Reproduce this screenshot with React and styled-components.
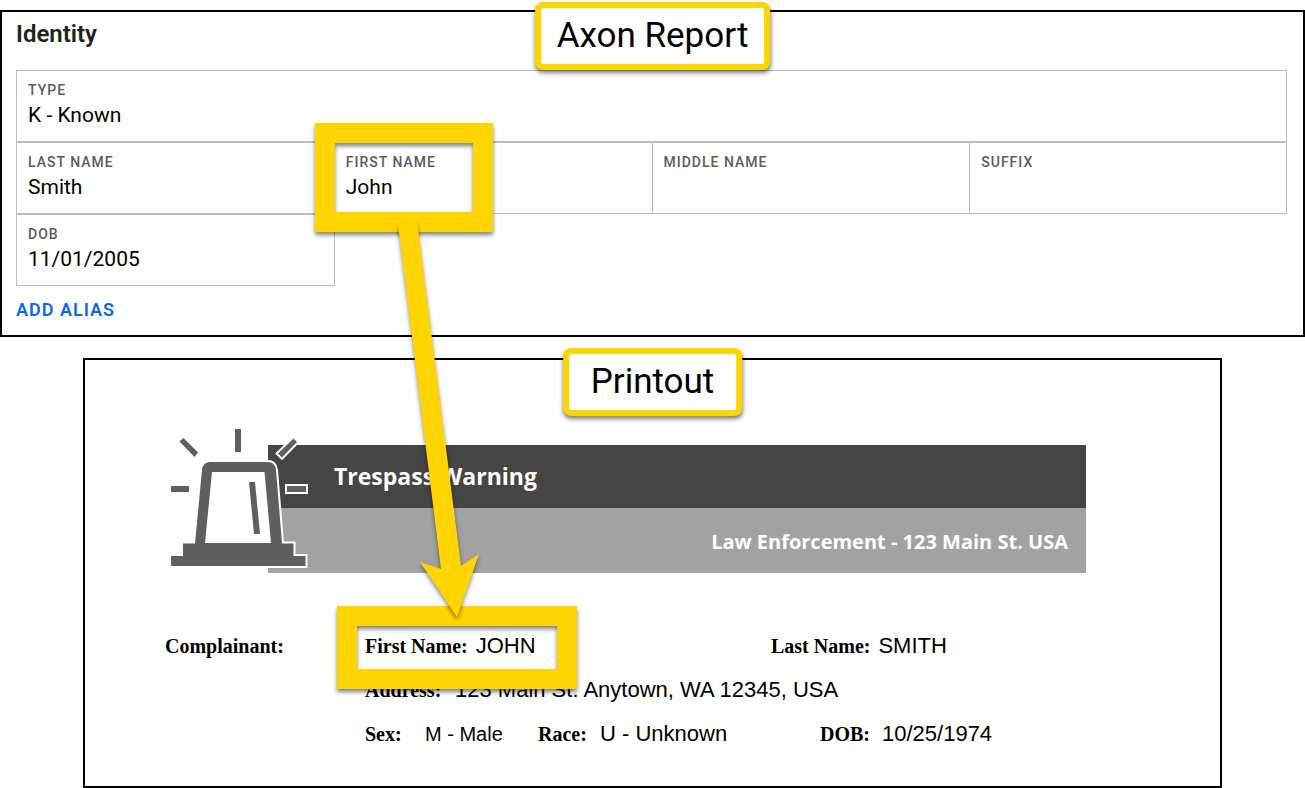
import styled, { createGlobalStyle } from "styled-components";

const GlobalStyle = createGlobalStyle`
* {
  box-sizing: border-box;
}
body {
  margin: 0;
  background: #ffffff;
  color: #000000;
  font-family: Roboto, sans-serif;
}
`;

const Page = styled.main`
position: relative;
display: flex;
flex-direction: column;
gap: 21px;
padding-top: 10px;
`;

const Panel = styled.section`
position: relative;
border: 2px solid #000000;
`;

const ReportPanel = styled(Panel)`
padding: 8px 16px 13px 14px;
`;

const PrintPanel = styled(Panel)`
margin: 0 83px;
padding: 85px 134px 40px 80px;
`;

const Badge = styled.h2`
position: absolute;
z-index: 2;
top: -10px;
left: 50%;
transform: translateX(-50%);
margin: 0;
padding: 7px 16px;
border: 6px solid #ffd500;
border-radius: 8px;
background: #ffffff;
box-shadow: 0 3px 4px rgba(0, 0, 0, 0.5);
font-size: 35px;
font-weight: 400;
line-height: 42px;
white-space: nowrap;
`;

const PrintBadge = styled(Badge)`
top: -12px;
padding: 7px 22px;
`;

const Title = styled.h3`
margin: 0 0 22px;
color: #222222;
font-size: 24px;
font-weight: 600;
line-height: 28px;
`;

const Cells = styled.dl`
display: grid;
grid-template-columns: repeat(4, 1fr);
margin: 0;
`;

const Cell = styled.div`
position: relative;
grid-column: ${({ $wide }) => ($wide ? "1 / -1" : "auto")};
margin-right: ${({ $last }) => ($last ? "0" : "-1px")};
height: 72px;
padding: 11px;
border: 1px solid #bdbdbd;
`;

const CellLabel = styled.dt`
color: #5c5c5c;
font-size: 14px;
font-weight: 500;
line-height: 16px;
letter-spacing: 1px;
text-transform: uppercase;
`;

const CellValue = styled.dd`
margin: 5px 0 0;
font-size: 21px;
font-weight: 400;
line-height: 24px;
`;

const AliasButton = styled.button`
display: block;
margin-top: 12px;
padding: 0;
border: none;
background: none;
color: #0a68e8;
font-family: inherit;
font-size: 18px;
font-weight: 600;
line-height: 24px;
letter-spacing: 1px;
text-transform: uppercase;
`;

const Highlight = styled.span`
position: absolute;
z-index: 1;
border: 20px solid #ffd500;
filter: drop-shadow(0 3px 2px rgba(0, 0, 0, 0.5));
pointer-events: none;
`;

const CellHighlight = styled(Highlight)`
top: -20px;
left: -20px;
width: 178px;
height: 109px;
`;

const FieldHighlight = styled(Highlight)`
top: -28px;
left: -28px;
width: 240px;
height: 83px;
`;

const Banner = styled.header`
position: relative;
margin-left: 103px;
color: #ffffff;
font-family: "Trebuchet MS", "Open Sans", sans-serif;
font-weight: 700;
`;

const BannerTitle = styled.h1`
margin: 0;
padding-left: 66px;
background: #454545;
font-size: 23px;
font-weight: inherit;
line-height: 63px;
`;

const BannerAddress = styled.p`
margin: 0;
padding: 2px 18px 0 0;
background: #a2a2a2;
font-size: 20px;
line-height: 63px;
text-align: right;
`;

const Siren = styled.svg`
position: absolute;
top: -19px;
left: -100px;
`;

const Party = styled.div`
display: grid;
grid-template-columns: 200px 1fr;
margin-top: 61px;
`;

const Lines = styled.div`
display: flex;
flex-direction: column;
gap: 20px;
`;

const Line = styled.div`
display: grid;
grid-template-columns: ${({ $columns }) => $columns};
`;

const Field = styled.div`
position: relative;
display: flex;
align-items: baseline;
gap: 8px;
line-height: 24px;
white-space: nowrap;
`;

const FieldLabel = styled.span`
min-width: ${({ $width }) => $width || "0"};
font-family: "Liberation Serif", serif;
font-size: 20px;
font-weight: 700;
`;

const FieldValue = styled.span`
font-family: "Liberation Sans", sans-serif;
font-size: ${({ $small }) => ($small ? "20px" : "22px")};
`;

const Arrow = styled.svg`
position: absolute;
z-index: 3;
top: 215px;
left: 390px;
filter: drop-shadow(0 3px 2px rgba(0, 0, 0, 0.45));
pointer-events: none;
`;

const cells = [
  { label: "Type", value: "K - Known", wide: true },
  { label: "Last Name", value: "Smith" },
  { label: "First Name", value: "John", marked: true },
  { label: "Middle Name", value: "" },
  { label: "Suffix", value: "", last: true },
  { label: "DOB", value: "11/01/2005" },
];

function PrintField({ label, value, width, small, marked }) {
  return (
    <Field>
      <FieldLabel $width={width}>{label}</FieldLabel>
      <FieldValue $small={small}>{value}</FieldValue>
      {marked && <FieldHighlight />}
    </Field>
  );
}

function SirenIcon() {
  return (
    <Siren width="144" height="146" viewBox="168 426 144 146" fill="#5f5f5f" aria-hidden="true">
      <g stroke="#ffffff" strokeWidth="4" strokeLinejoin="miter" paintOrder="stroke">
        <path d="M171 556H183V543.500H195L202 470Q203 462 210 462H268Q275 462 276 470L282 543.500H293.500V556H305.500V566H171Z" />
        <path d="M293.500 438.500L297 442L282 457.500L278 453.500Z" />
        <path d="M287 486H306V492H287Z" />
      </g>
      <path d="M212 472H264.500L271 543H205Z" fill="#ffffff" />
      <path d="M249 482H255L260 534H254Z" />
      <path d="M235 429H241V452H235Z" />
      <path d="M171 486H189V492H171Z" />
      <path d="M179.500 441.500L183.500 438L198 452.500L194.500 457Z" />
    </Siren>
  );
}

export default function App() {
  return (
    <>
      <GlobalStyle />
      <Page>
        <ReportPanel>
          <Badge>Axon Report</Badge>
          <Title>Identity</Title>
          <Cells>
            {cells.map(({ label, value, wide, last, marked }) => (
              <Cell key={label} $wide={wide} $last={wide || last}>
                <CellLabel>{label}</CellLabel>
                <CellValue>{value}</CellValue>
                {marked && <CellHighlight />}
              </Cell>
            ))}
          </Cells>
          <AliasButton type="button">Add Alias</AliasButton>
        </ReportPanel>

        <PrintPanel>
          <PrintBadge>Printout</PrintBadge>
          <Banner>
            <BannerTitle>Trespass Warning</BannerTitle>
            <BannerAddress>Law Enforcement - 123 Main St. USA</BannerAddress>
            <SirenIcon />
          </Banner>
          <Party>
            <Field>
              <FieldLabel>Complainant:</FieldLabel>
            </Field>
            <Lines>
              <Line $columns="406fr 315fr">
                <PrintField label="First Name:" value="JOHN" marked />
                <PrintField label="Last Name:" value="SMITH" />
              </Line>
              <Line $columns="1fr">
                <PrintField
                  label="Address:"
                  value="123 Main St. Anytown, WA 12345, USA"
                  width="82px"
                />
              </Line>
              <Line $columns="173fr 282fr 266fr">
                <PrintField label="Sex:" value="M - Male" width="52px" small />
                <PrintField label="Race:" value="U - Unknown" width="54px" />
                <PrintField label="DOB:" value="10/25/1974" width="54px" />
              </Line>
            </Lines>
          </Party>
        </PrintPanel>

        <Arrow width="100" height="410" viewBox="390 215 100 410" aria-hidden="true">
          <path d="M398 224L417 221L461 566L479 554L457 617L420 562L441 569Z" fill="#ffd500" />
        </Arrow>
      </Page>
    </>
  );
}
